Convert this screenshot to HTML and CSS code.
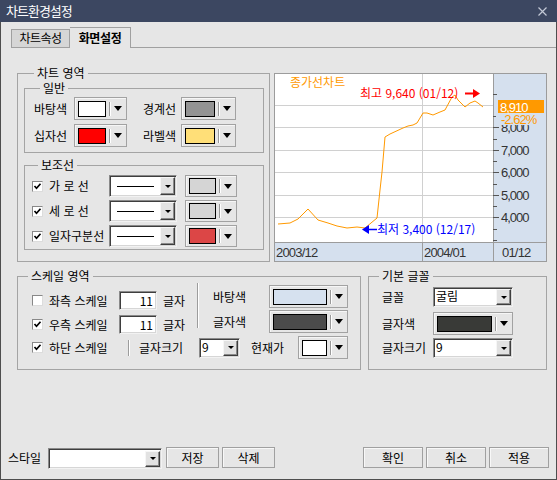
FILE: index.html
```html
<!DOCTYPE html>
<html lang="ko">
<head>
<meta charset="utf-8">
<title>차트환경설정</title>
<link rel="stylesheet" href="styles.css">
</head>
<body>
<div class="window">
  <div class="titlebar">
    <span class="title">차트환경설정</span>
    <svg class="close" width="9" height="9" viewBox="0 0 9 9"><path d="M0.5 0.5L8.5 8.5M8.5 0.5L0.5 8.5" stroke="#c3c9d6" stroke-width="1.2"/></svg>
  </div>
  <div class="frame">
    <div class="tabs">
      <div class="tab">차트속성</div>
      <div class="tab active">화면설정</div>
      <div class="tab-fill"></div>
    </div>
    <div class="page">
      <div class="row-top">
        <fieldset class="grp chart-area">
          <legend>차트 영역</legend>
          <fieldset class="grp sub general">
            <legend>일반</legend>
            <div class="gen-grid">
              <span class="lbl">바탕색</span>
              <div class="cbtn w53"><span class="sw c-white"></span><span class="sep"></span><span class="arr"></span></div>
              <span class="lbl l2">경계선</span>
              <div class="cbtn w55"><span class="sw c-gray"></span><span class="sep"></span><span class="arr"></span></div>
              <span class="lbl">십자선</span>
              <div class="cbtn w53"><span class="sw c-red"></span><span class="sep"></span><span class="arr"></span></div>
              <span class="lbl l2">라벨색</span>
              <div class="cbtn w55"><span class="sw c-yellow"></span><span class="sep"></span><span class="arr"></span></div>
            </div>
          </fieldset>
          <fieldset class="grp sub aux">
            <legend>보조선</legend>
            <div class="aux-row">
              <span class="cb checked"><svg width="9" height="9" viewBox="0 0 9 9"><path d="M1.5 4L3.5 6.2L7.5 1.8" fill="none" stroke="#000" stroke-width="1.7"/></svg></span>
              <span class="lbl aux-lbl">가 로 선</span>
              <div class="combo linesel"><span class="line"></span><span class="grow"></span><span class="dd"></span></div>
              <div class="cbtn w52 h22"><span class="sw c-lgray"></span><span class="sep"></span><span class="arr"></span></div>
            </div>
            <div class="aux-row">
              <span class="cb checked"><svg width="9" height="9" viewBox="0 0 9 9"><path d="M1.5 4L3.5 6.2L7.5 1.8" fill="none" stroke="#000" stroke-width="1.7"/></svg></span>
              <span class="lbl aux-lbl">세 로 선</span>
              <div class="combo linesel"><span class="line"></span><span class="grow"></span><span class="dd"></span></div>
              <div class="cbtn w52 h22"><span class="sw c-lgray"></span><span class="sep"></span><span class="arr"></span></div>
            </div>
            <div class="aux-row">
              <span class="cb checked"><svg width="9" height="9" viewBox="0 0 9 9"><path d="M1.5 4L3.5 6.2L7.5 1.8" fill="none" stroke="#000" stroke-width="1.7"/></svg></span>
              <span class="lbl aux-lbl">일자구분선</span>
              <div class="combo linesel"><span class="line"></span><span class="grow"></span><span class="dd"></span></div>
              <div class="cbtn w52 h22"><span class="sw c-red2"></span><span class="sep"></span><span class="arr"></span></div>
            </div>
          </fieldset>
        </fieldset>
        <svg class="preview" width="273" height="189" viewBox="0 0 273 189">
          <rect x="0" y="0" width="273" height="189" fill="#d5e0ee"/>
          <rect x="0" y="0" width="219" height="169" fill="#ffffff"/>
          <path d="M0 32.5H219M0 54.5H219M0 77.5H219M0 99.5H219M0 122.5H219M0 144.5H219M148.5 0V169" stroke="#d0d0d0" stroke-width="1"/>
          <path d="M148.5 169V189M219.5 0V189M0 169.5H273" stroke="#9c9c9c" stroke-width="1"/>
          <rect x="0.5" y="0.5" width="272" height="188" fill="none" stroke="#9c9c9c"/>
          <path d="M219 54.5H225M219 77.5H225M219 99.5H225M219 122.5H225M219 144.5H225M219 21.5H223M219 43.5H223M219 66.5H223M219 88.5H223M219 111.5H223M219 133.5H223M219 156.5H223M219 167.5H223" stroke="#555" stroke-width="1"/>
          <g class="ax" fill="#333">
            <text x="227" y="58.5">8,000</text>
            <text x="227" y="81.5">7,000</text>
            <text x="227" y="103.5">6,000</text>
            <text x="227" y="126.5">5,000</text>
            <text x="227" y="148.5">4,000</text>
          </g>
          <rect x="222" y="41" width="50" height="11" fill="#d5e0ee"/>
          <rect x="224" y="27" width="46" height="13" fill="#ff9900"/>
          <text class="ax" x="226" y="38.5" fill="#ffffff">8,910</text>
          <text class="ax" x="227" y="51" fill="#ff9900">-2.62%</text>
          <g class="ax date" fill="#333">
            <text x="2" y="183.5">2003/12</text>
            <text x="150" y="183.5">2004/01</text>
            <text x="228" y="183.5">01/12</text>
          </g>
          <polyline fill="none" stroke="#ff9900" stroke-width="1" points="4,151 16,150 24,146 34,136 44,147 54,150 63,153 73,155 83,154 91,155 103,145 106,117 108,99 111,64 116,61 129,55 134,53 139,52 143,50 149,40 153,40 159,42 166,39 171,37 178,24 181,22 184,27 191,34 196,30 201,28 204,30 209,34"/>
          <text class="ko" x="16" y="13.5" fill="#ff9900">종가선차트</text>
          <text class="ko" x="86" y="25" fill="#ff0000">최고 9,640 (01/12)</text>
          <path d="M191 20.5H200" stroke="#ff0000" stroke-width="2"/>
          <polygon points="199,16 206,20.5 199,25" fill="#ff0000"/>
          <polygon points="88,156.5 95,152 95,161" fill="#0000ff"/>
          <path d="M94 156.5H103" stroke="#0000ff" stroke-width="1.5"/>
          <text class="ko" x="103" y="161" fill="#0000ff">최저 3,400 (12/17)</text>
        </svg>
      </div>
      <div class="row-mid">
        <fieldset class="grp scale">
          <legend>스케일 영역</legend>
          <div class="scale-top">
            <div class="scale-left">
              <div class="srow">
                <span class="cb"></span>
                <span class="lbl s-lbl">좌측 스케일</span>
                <span class="num">11</span>
                <span class="unit">글자</span>
              </div>
              <div class="srow">
                <span class="cb checked"><svg width="9" height="9" viewBox="0 0 9 9"><path d="M1.5 4L3.5 6.2L7.5 1.8" fill="none" stroke="#000" stroke-width="1.7"/></svg></span>
                <span class="lbl s-lbl">우측 스케일</span>
                <span class="num">11</span>
                <span class="unit">글자</span>
              </div>
            </div>
            <span class="vsep tall"></span>
            <div class="scale-right">
              <div class="crow">
                <span class="lbl r-lbl">바탕색</span>
                <div class="cbtn w79"><span class="sw c-lblue"></span><span class="sep"></span><span class="arr"></span></div>
              </div>
              <div class="crow">
                <span class="lbl r-lbl">글자색</span>
                <div class="cbtn w79"><span class="sw c-dgray"></span><span class="sep"></span><span class="arr"></span></div>
              </div>
            </div>
          </div>
          <div class="scale-bottom">
            <span class="cb checked"><svg width="9" height="9" viewBox="0 0 9 9"><path d="M1.5 4L3.5 6.2L7.5 1.8" fill="none" stroke="#000" stroke-width="1.7"/></svg></span>
            <span class="lbl b-lbl">하단 스케일</span>
            <span class="vsep short"></span>
            <span class="lbl fs-lbl">글자크기</span>
            <div class="combo small"><span class="val">9</span><span class="dd"></span></div>
            <span class="lbl cur-lbl">현재가</span>
            <div class="cbtn w50"><span class="sw c-white"></span><span class="sep"></span><span class="arr"></span></div>
          </div>
        </fieldset>
        <fieldset class="grp bfont">
          <legend>기본 글꼴</legend>
          <div class="bf-body">
            <div class="bfrow r1">
              <span class="lbl bf-lbl">글꼴</span>
              <div class="combo bf"><span class="val">굴림</span><span class="dd"></span></div>
            </div>
            <div class="bfrow r2">
              <span class="lbl bf-lbl">글자색</span>
              <div class="cbtn w80"><span class="sw c-dark"></span><span class="sep"></span><span class="arr"></span></div>
            </div>
            <div class="bfrow r3">
              <span class="lbl bf-lbl">글자크기</span>
              <div class="combo bf"><span class="val">9</span><span class="dd"></span></div>
            </div>
          </div>
        </fieldset>
      </div>
      <div class="bottombar">
        <span class="lbl style-lbl">스타일</span>
        <div class="combo stylesel"><span class="val"></span><span class="dd"></span></div>
        <button class="btn b-save">저장</button>
        <button class="btn b-del">삭제</button>
        <span class="grow"></span>
        <button class="btn b-wide">확인</button>
        <button class="btn b-wide">취소</button>
        <button class="btn b-wide">적용</button>
      </div>
    </div>
  </div>
</div>
</body>
</html>
```

FILE: styles.css
```css
* { box-sizing: border-box; }
html, body { margin: 0; padding: 0; }
body {
  width: 557px;
  height: 480px;
  overflow: hidden;
  background: #e6e6e6;
  font-family: "Noto Sans CJK KR", "Noto Sans", sans-serif;
  font-size: 12px;
  color: #000;
}
.window {
  width: 557px;
  height: 480px;
  display: flex;
  flex-direction: column;
  background: #e6e6e6;
}
.titlebar {
  height: 22px;
  flex: none;
  display: flex;
  align-items: center;
  padding-left: 6px;
  background: #3c4761;
  color: #fff;
}
.title {
  font-size: 13px;
  line-height: 22px;
  letter-spacing: -1px;
}
.close { margin-left: auto; margin-right: 10px; display: block; }
.frame {
  flex: 1;
  display: flex;
  flex-direction: column;
  border: 1px solid #4e4e4e;
  border-top: none;
  min-height: 0;
}
.tabs {
  height: 26px;
  flex: none;
  display: flex;
  align-items: flex-end;
  padding-left: 10px;
}
.tab {
  width: 59px;
  height: 19px;
  border: 1px solid #a0a0a0;
  background: #d6d6d6;
  text-align: center;
  line-height: 16px;
  font-size: 12px;
  letter-spacing: -0.6px;
}
.tab.active {
  width: 61px;
  height: 21px;
  border-left: none;
  border-bottom: none;
  background: #e6e6e6;
  font-weight: bold;
  line-height: 19px;
  letter-spacing: -0.4px;
}
.tab-fill {
  flex: 1;
  height: 1px;
  border-bottom: 1px solid #a0a0a0;
}
.page {
  flex: 1;
  display: flex;
  flex-direction: column;
  padding: 0 9px 0 16px;
}
.lbl { display: inline-block; line-height: 16px; white-space: nowrap; }

/* group boxes */
.grp {
  margin: 0;
  padding: 0;
  min-width: 0;
  border: 1px solid #a4a4a4;
}
.grp > legend {
  padding: 0 3px;
  margin-left: 10px;
  line-height: 14px;
  font-size: 12px;
}
.grp.sub > legend { margin-left: 6px; }

.row-top {
  display: flex;
  align-items: flex-start;
  gap: 4px;
  margin-top: 18px;
}
.chart-area {
  width: 253px;
  height: 196px;
  padding: 1px 5px 0 6px;
}
.general { padding: 2px 0 5px 9px; }
.gen-grid {
  display: grid;
  grid-template-columns: 40px 53px 54px 55px;
  row-gap: 4px;
  align-items: center;
}
.gen-grid .l2 { padding-left: 16px; }
.aux {
  margin-top: 5px;
  padding: 3px 0 2px 7px;
  display: flex;
  flex-direction: column;
  gap: 3px;
}
.aux-row {
  display: flex;
  align-items: center;
  height: 22px;
}
.aux-lbl { width: 60px; }
.aux-row .cbtn { margin-left: 8px; }

/* checkbox */
.cb {
  width: 11px;
  height: 11px;
  flex: none;
  margin-right: 6px;
  background: #fff;
  border: 1px solid;
  border-color: #888 #dcdcdc #dcdcdc #888;
  display: flex;
  align-items: center;
  justify-content: center;
}
.cb svg { display: block; }

/* color button */
.cbtn {
  display: flex;
  align-items: center;
  height: 23px;
  padding: 0 4px 0 3px;
  border: 1px solid #a2a2a2;
  box-shadow: inset 1px 1px 0 #f6f6f6;
  background: #e6e6e6;
  flex: none;
}
.cbtn.h22 { height: 22px; }
.cbtn .sw {
  flex: 1;
  height: 16px;
  border: 1px solid #000;
}
.cbtn .sep {
  width: 2px;
  height: 14px;
  margin-left: 3px;
  border-left: 1px solid #9a9a9a;
  border-right: 1px solid #fff;
  flex: none;
}
.cbtn .arr {
  width: 0;
  height: 0;
  margin-left: 3px;
  border-left: 4px solid transparent;
  border-right: 4px solid transparent;
  border-top: 5px solid #000;
  flex: none;
}
.w50 { width: 50px; }
.w52 { width: 52px; }
.w53 { width: 53px; }
.w55 { width: 55px; }
.w79 { width: 79px; }
.w80 { width: 80px; }
.c-white { background: #ffffff; }
.c-gray { background: #939393; }
.c-red { background: #ff0000; }
.c-yellow { background: #ffdf78; }
.c-lgray { background: #d5d5d5; }
.c-red2 { background: #dc4646; }
.c-lblue { background: #d6e1ef; }
.c-dgray { background: #4b4b4b; }
.c-dark { background: #393a37; }

/* combo / sunken fields */
.combo, .num {
  display: flex;
  align-items: center;
  background: #fff;
  border: 1px solid;
  border-color: #8a8a8a #f2f2f2 #f2f2f2 #8a8a8a;
  box-shadow: inset 1px 1px 0 #3e3e3e, inset -1px -1px 0 #d6d6d6;
  padding: 1px;
  flex: none;
}
.combo .val {
  flex: 1;
  padding-left: 1px;
  line-height: 14px;
  align-self: flex-start;
  margin-top: 0;
}
.grow { flex: 1; }
.dd {
  width: 15px;
  height: 16px;
  flex: none;
  background: #e2e2e2;
  border: 1px solid;
  border-color: #f6f6f6 #3e3e3e #3e3e3e #f6f6f6;
  box-shadow: inset -1px -1px 0 #8a8a8a;
  display: flex;
  align-items: center;
  justify-content: center;
}
.dd::after {
  content: "";
  width: 0;
  height: 0;
  border-left: 3px solid transparent;
  border-right: 3px solid transparent;
  border-top: 3px solid #000;
}
.linesel { width: 68px; height: 22px; }
.linesel .line {
  width: 37px;
  height: 1px;
  background: #000;
  margin-left: 6px;
  flex: none;
}
.linesel .dd { height: 18px; }

.preview { display: block; margin-top: 7px; flex: none; }
.preview .ax {
  font-family: "Liberation Sans", Arial, sans-serif;
  font-size: 13px;
  letter-spacing: -1px;
}
.preview .date { letter-spacing: -0.8px; }
.preview .ko {
  font-family: "Noto Sans CJK KR", sans-serif;
  font-size: 12px;
}

/* middle row */
.row-mid {
  display: flex;
  gap: 7px;
  margin-top: 7px;
}
.scale { width: 344px; height: 101px; }
.bfont { width: 179px; height: 101px; }
.scale-top { display: flex; align-items: flex-start; }
.scale-left {
  width: 179px;
  padding: 8px 0 0 14px;
  display: flex;
  flex-direction: column;
  gap: 5px;
}
.srow { display: flex; align-items: center; height: 19px; }
.s-lbl { width: 70px; }
.num {
  width: 38px;
  height: 19px;
  justify-content: flex-end;
  padding-right: 3px;
  line-height: 14px;
}
.unit { margin-left: 6px; line-height: 16px; }
.vsep {
  width: 2px;
  border-left: 1px solid #9c9c9c;
  border-right: 1px solid #fff;
  flex: none;
}
.vsep.tall { height: 45px; }
.vsep.short { height: 16px; }
.scale-right {
  padding: 2px 0 0 14px;
  display: flex;
  flex-direction: column;
  gap: 2px;
}
.crow { display: flex; align-items: center; }
.r-lbl { width: 56px; }
.scale-bottom {
  display: flex;
  align-items: center;
  height: 23px;
  margin-top: 2px;
  padding-left: 14px;
}
.b-lbl { width: 79px; }
.fs-lbl { width: 60px; margin-left: 9px; }
.combo.small { width: 41px; height: 20px; }
.cur-lbl { width: 47px; margin-left: 11px; }

.bf-body { padding: 4px 0 0 13px; display: flex; flex-direction: column; }
.bfrow { display: flex; align-items: center; }
.bfrow.r2 { margin-top: 5px; }
.bfrow.r3 { margin-top: 3px; }
.bf-lbl { width: 51px; }
.combo.bf { width: 80px; height: 20px; }

/* bottom bar */
.bottombar {
  margin-top: auto;
  margin-bottom: 11px;
  margin-left: -9px;
  margin-right: -2px;
  height: 21px;
  display: flex;
  align-items: center;
}
.style-lbl { width: 40px; }
.combo.stylesel { width: 114px; height: 21px; margin-top: 2px; }
.btn {
  height: 21px;
  padding: 0;
  margin: 0 0 0 3px;
  font-family: "Noto Sans CJK KR", sans-serif;
  font-size: 12px;
  line-height: 16px;
  color: #000;
  background: #e6e6e6;
  border: 1px solid #a0a0a0;
  box-shadow: inset 1px 1px 0 #f8f8f8;
}
.b-save { width: 53px; margin-left: 4px; }
.b-del { width: 53px; }
.b-wide { width: 60px; }
```
